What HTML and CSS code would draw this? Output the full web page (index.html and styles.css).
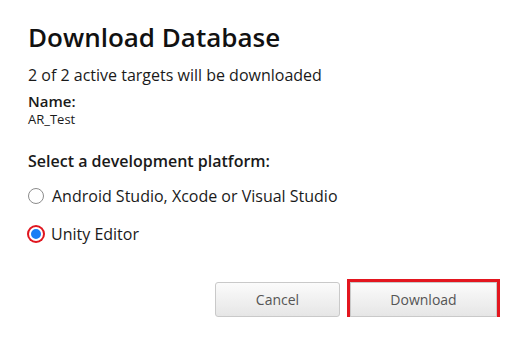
FILE: index.html
```html
<!DOCTYPE html>
<html>
<head>
<meta charset="utf-8">
<link rel="stylesheet" href="styles.css">
</head>
<body>
<div class="dialog">
  <h1 class="title">Download Database</h1>
  <p class="subtitle">2 of 2 active targets will be downloaded</p>
  <div class="label">Name:</div>
  <div class="value">AR_Test</div>
  <div class="section">Select a development platform:</div>
  <label class="option"><span class="radio"></span><span>Android Studio, Xcode or Visual Studio</span></label>
  <label class="option option-second"><span class="radio checked"></span><span>Unity Editor</span></label>
  <div class="actions">
    <button class="btn btn-cancel">Cancel</button>
    <button class="btn btn-primary">Download</button>
  </div>
</div>
</body>
</html>
```
FILE: styles.css
```css
html, body {
  margin: 0;
  padding: 0;
  background: #fff;
}
body {
  font-family: "Open Sans", "Noto Sans", sans-serif;
  color: #1a1a1a;
}
.dialog {
  padding: 21px 29px 0 28px;
  display: flex;
  flex-direction: column;
}
.title {
  margin: 0;
  font-size: 26px;
  line-height: 32px;
  font-weight: 600;
  color: #111;
}
.subtitle {
  margin: 12px 0 0;
  font-size: 16px;
  line-height: 20px;
}
.label {
  margin-top: 7px;
  font-size: 15px;
  line-height: 18px;
  font-weight: 600;
}
.value {
  margin-top: 1px;
  font-size: 13px;
  line-height: 16px;
}
.section {
  margin-top: 24px;
  font-size: 16px;
  line-height: 20px;
  font-weight: 600;
}
.option {
  margin-top: 15px;
  display: flex;
  align-items: center;
  gap: 8px;
  font-size: 16px;
  line-height: 20px;
}
.option-second {
  margin-top: 18px;
}
.radio {
  width: 14px;
  height: 14px;
  border: 1px solid #8c8c8c;
  border-radius: 50%;
  box-sizing: content-box;
  background: #fff;
  flex: none;
}
.radio.checked {
  width: 10px;
  height: 10px;
  border: 2px solid #fff;
  background: #1a7ff5;
  box-shadow: 0 0 0 2px #e0161f;
  margin-left: 1px;
}
.actions {
  margin-top: 38px;
  display: flex;
  justify-content: flex-end;
  align-items: center;
  gap: 10px;
}
.btn {
  font-family: "Open Sans", "Noto Sans", sans-serif;
  font-size: 14px;
  color: #555;
  height: 35px;
  border: 1px solid #c9c9c9;
  border-radius: 3px;
  background: linear-gradient(#fbfbfb, #e6e6e6);
  padding: 0;
}
.btn-cancel {
  width: 125px;
}
.btn-primary {
  width: 147px;
  border-radius: 0;
  outline: 3px solid #e3161f;
  margin-right: 3px;
}
```
